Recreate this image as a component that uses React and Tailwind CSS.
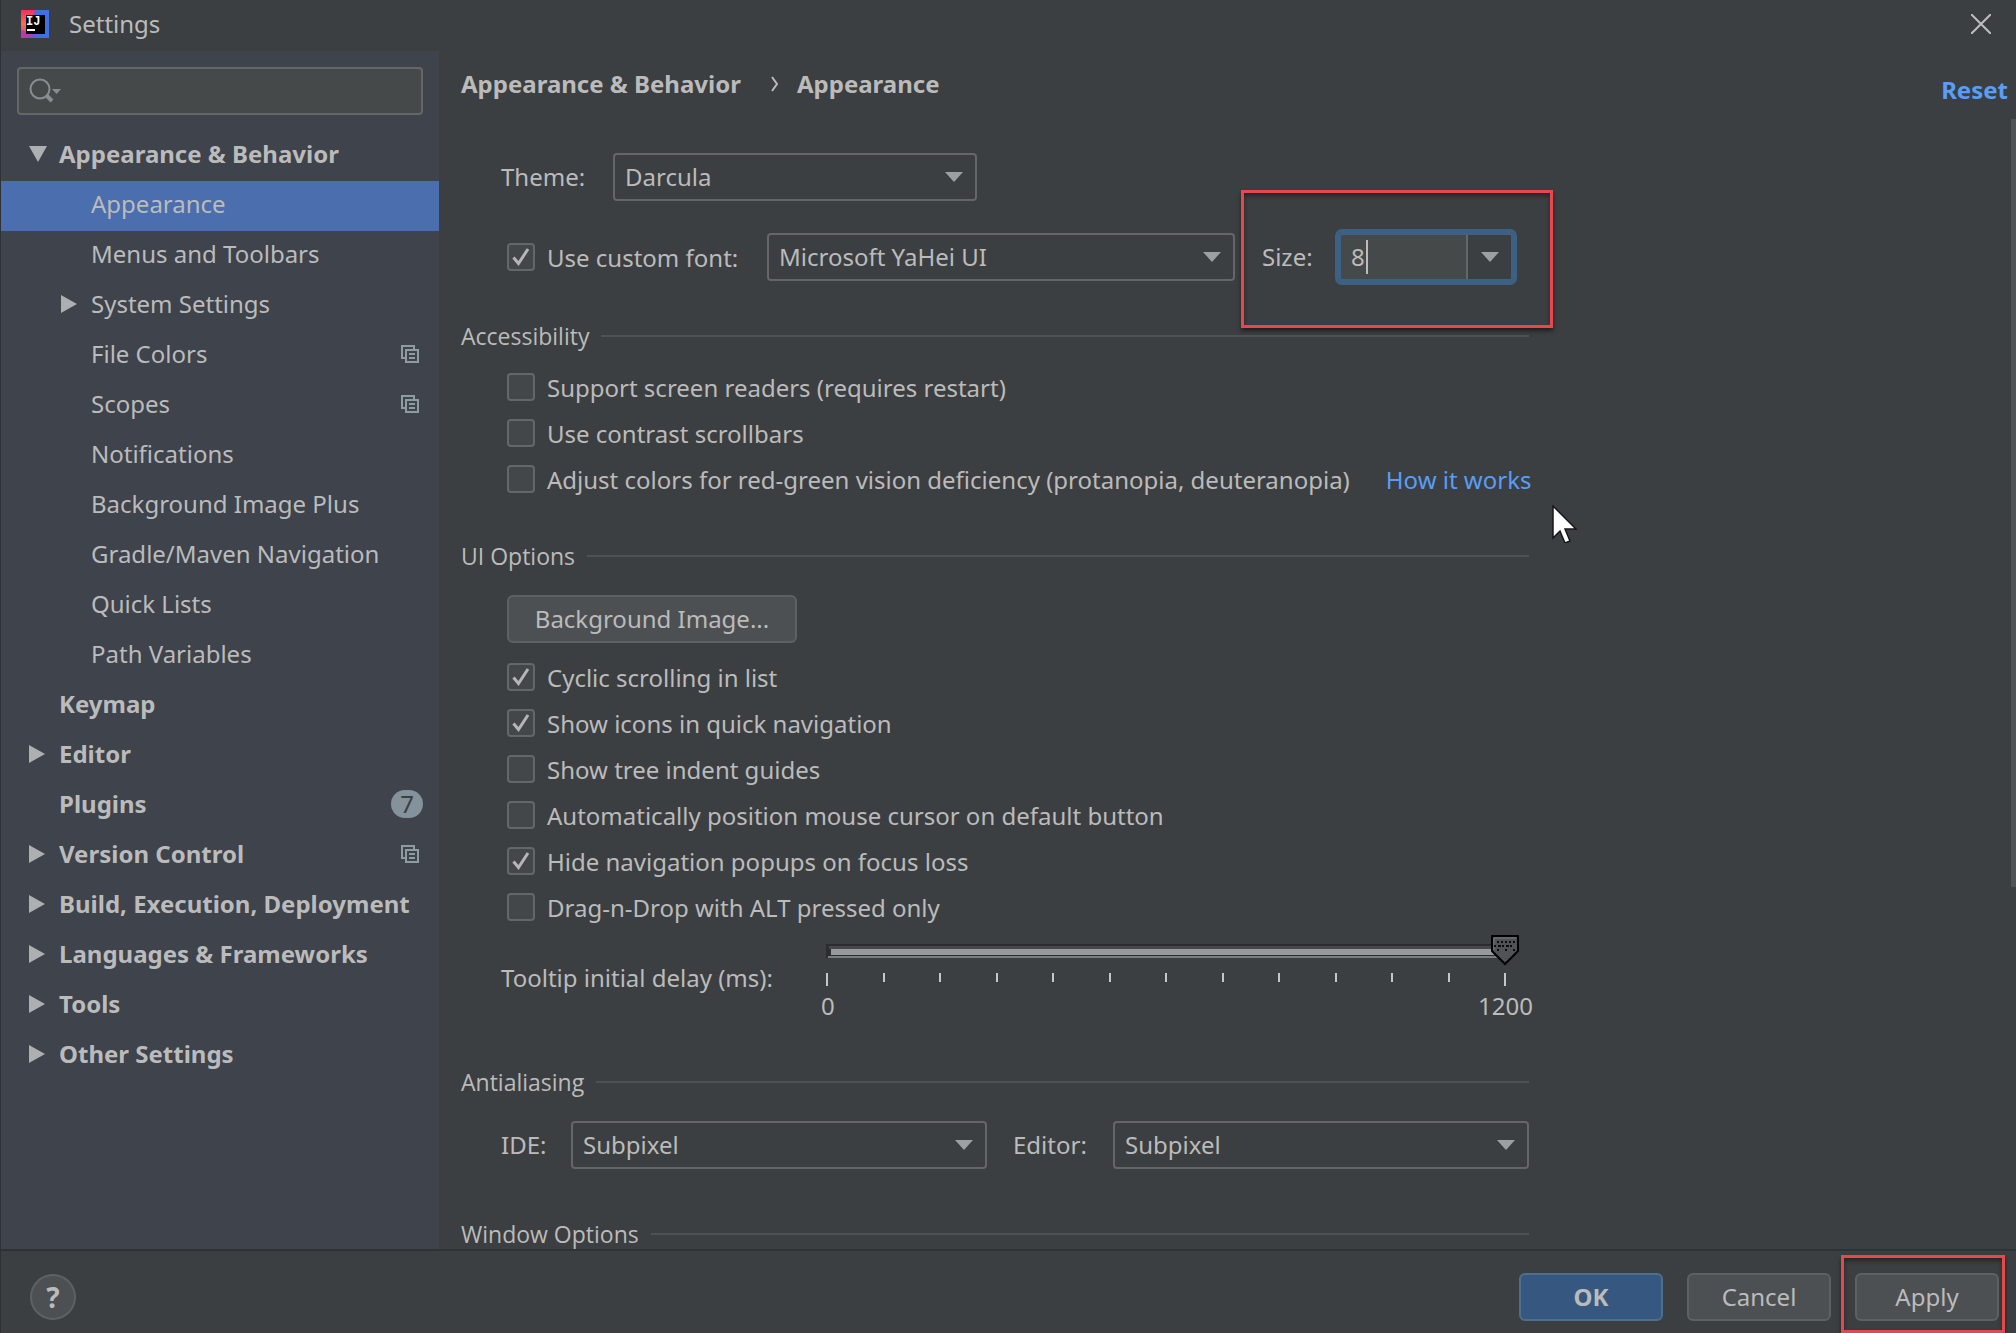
import React, { useState } from "react";

const treeItems = [
  { label: "Appearance & Behavior", level: 1, arrow: "down" },
  { label: "Appearance", level: 2, selected: true },
  { label: "Menus and Toolbars", level: 2 },
  { label: "System Settings", level: 2, arrow: "right" },
  { label: "File Colors", level: 2, project: true },
  { label: "Scopes", level: 2, project: true },
  { label: "Notifications", level: 2 },
  { label: "Background Image Plus", level: 2 },
  { label: "Gradle/Maven Navigation", level: 2 },
  { label: "Quick Lists", level: 2 },
  { label: "Path Variables", level: 2 },
  { label: "Keymap", level: 1 },
  { label: "Editor", level: 1, arrow: "right" },
  { label: "Plugins", level: 1, badge: "7" },
  { label: "Version Control", level: 1, arrow: "right", project: true },
  { label: "Build, Execution, Deployment", level: 1, arrow: "right" },
  { label: "Languages & Frameworks", level: 1, arrow: "right" },
  { label: "Tools", level: 1, arrow: "right" },
  { label: "Other Settings", level: 1, arrow: "right" },
];

function Logo() {
  return (
    <svg width="28" height="28" viewBox="0 0 28 28" aria-hidden="true">
      <defs>
        <linearGradient id="logoLeft" x1="0" y1="0" x2="0" y2="1">
          <stop offset="0" stopColor="#f0305f" />
          <stop offset="0.5" stopColor="#f5704f" />
          <stop offset="1" stopColor="#b0409a" />
        </linearGradient>
      </defs>
      <rect width="28" height="28" fill="#3f6fe0" />
      <path d="M0 0h15l-3 5-6 8 6 9-4 6H0z" fill="url(#logoLeft)" />
      <path d="M0 20l9 3-1 5H0z" fill="#b23fa8" />
      <path d="M8 28l4-6h6l-4 6z" fill="#7a50d8" />
      <rect x="5" y="5" width="19" height="19" fill="#000" />
      <text x="5" y="15" fill="#fff" fontSize="12" fontWeight="700" fontFamily="Liberation Mono, monospace">IJ</text>
      <rect x="6" y="19" width="8" height="2" fill="#fff" />
    </svg>
  );
}

function TreeArrow({ dir }) {
  return (
    <svg width="18" height="18" viewBox="0 0 18 18" fill="#adb0b3" aria-hidden="true">
      {dir === "down" ? <path d="M0 1h18L9 17z" /> : <path d="M0 0l16 9L0 18z" />}
    </svg>
  );
}

function ProjectIcon() {
  return (
    <svg width="18" height="18" viewBox="0 0 18 18" fill="none" stroke="#8f9ba3" strokeWidth="2" aria-hidden="true">
      <path d="M4 13H1V1h12v3" />
      <path d="M5 5h12v12H5z" />
      <path d="M8 9h6M8 13h6" />
    </svg>
  );
}

function TreeRow({ item }) {
  const { label, level, arrow, selected, project, badge } = item;
  return (
    <li>
      <button
        type="button"
        className={
          "flex h-[50px] w-full items-center pb-1 pr-4 text-left " +
          (level === 1 ? "pl-7 font-bold " : "pl-[60px] ") +
          (selected ? "bg-[#4b6eaf]" : "")
        }
      >
        <span className="w-[30px] shrink-0">{arrow && <TreeArrow dir={arrow} />}</span>
        <span className="flex-1 whitespace-nowrap">{label}</span>
        {project && (
          <span className="mr-1">
            <ProjectIcon />
          </span>
        )}
        {badge && (
          <span className="flex h-7 w-8 items-center justify-center rounded-full bg-[#84929b] font-normal text-[#3c3f41]">
            {badge}
          </span>
        )}
      </button>
    </li>
  );
}

function DownArrow() {
  return (
    <svg width="18" height="10" viewBox="0 0 18 10" fill="#9da0a2" aria-hidden="true">
      <path d="M0 0h18L9 10z" />
    </svg>
  );
}

function Select({ id, value, className }) {
  return (
    <div className={"relative " + className}>
      <select
        id={id}
        defaultValue={value}
        className="h-12 w-full appearance-none rounded border-2 border-[#646667] bg-[#3c3f41] pl-[10px] pr-10 text-[#bbbbbb] outline-none"
      >
        <option>{value}</option>
      </select>
      <span className="pointer-events-none absolute inset-y-0 right-[14px] flex items-center">
        <DownArrow />
      </span>
    </div>
  );
}

function Check({ label, checked }) {
  const [on, setOn] = useState(!!checked);
  return (
    <label className="flex h-[46px] items-center gap-3">
      <span className="grid">
        <input
          type="checkbox"
          checked={on}
          onChange={(e) => setOn(e.target.checked)}
          className="peer col-start-1 row-start-1 size-7 appearance-none rounded border-2 border-[#646768] bg-[#43474a]"
        />
        <svg
          width="28"
          height="28"
          viewBox="0 0 28 28"
          fill="none"
          stroke="#b4b6b8"
          strokeWidth="3"
          className="pointer-events-none invisible col-start-1 row-start-1 peer-checked:visible"
          aria-hidden="true"
        >
          <path d="M6.5 14.5l5 6L21 6" />
        </svg>
      </span>
      <span className="whitespace-nowrap pt-[2px]">{label}</span>
    </label>
  );
}

function SectionTitle({ children, className }) {
  return (
    <div className={"flex h-8 items-center gap-3 " + className}>
      <h2 className="whitespace-nowrap font-['Open_Sans','Noto_Sans',sans-serif] text-[23px]">{children}</h2>
      <span className="h-[2px] flex-1 bg-[#4f5254]" />
    </div>
  );
}

const minorTicks = [1, 2, 3, 4, 5, 6, 7, 8, 9, 10, 11];

function DelaySlider() {
  return (
    <div className="relative -mr-1 w-[720px]">
      <svg width="720" height="56" viewBox="0 0 720 56" className="block" aria-hidden="true">
        <rect x="13" y="10" width="680" height="14" fill="#2b2d2f" />
        <rect x="16" y="12" width="677" height="3" fill="#46494b" />
        <rect x="18" y="15" width="675" height="6" fill="#97999c" />
        <rect x="15" y="22" width="678" height="2" fill="#7b7e80" />
        <path d="M679 2h26v15l-13 13-13-13z" fill="#505355" stroke="#000" strokeWidth="2" />
        <path d="M681 16V4h22" fill="none" stroke="#777a7c" strokeWidth="1" />
        <g fill="#0c0d0e">
          {[684, 692, 700].map((x) => (
            <g key={x}>
              <rect x={x} y="7" width="2" height="2" />
              <rect x={x} y="15" width="2" height="2" />
              <rect x={x - 3} y="11" width="2" height="2" />
            </g>
          ))}
          {[688, 696].map((x) => (
            <g key={x}>
              <rect x={x} y="7" width="2" height="2" />
              <rect x={x - 3} y="11" width="3" height="2" />
            </g>
          ))}
        </g>
        <g fill="#c4c6c8">
          <rect x="13" y="39" width="2" height="13" />
          {minorTicks.map((i) => (
            <rect key={i} x={13 + Math.round(i * 56.5)} y="39" width="2" height="9" />
          ))}
          <rect x="691" y="39" width="2" height="13" />
        </g>
      </svg>
      <div className="flex justify-between pl-2">
        <span>0</span>
        <span>1200</span>
      </div>
      <input
        id="delay"
        type="range"
        min="0"
        max="1200"
        step="100"
        defaultValue="1200"
        className="absolute left-0 top-0 h-8 w-[706px] opacity-0"
      />
    </div>
  );
}

function MousePointer() {
  return (
    <svg width="26" height="38" viewBox="0 0 26 38" className="absolute left-[1113px] top-[386px]" aria-hidden="true">
      <path d="M1 1v32l7-7 5 12 5-2-5-12h11z" fill="#fff" stroke="#15171a" strokeWidth="1.5" />
    </svg>
  );
}

const buttonBase = "h-12 rounded-md border-2 text-center ";

export default function App() {
  return (
    <div className="flex h-screen flex-col overflow-hidden border-l border-[#2e3135] bg-[#3c3f41] font-['Noto_Sans','Open_Sans',sans-serif] text-[24px] leading-8 text-[#bbbbbb]">
      <header className="flex h-[51px] shrink-0 items-center justify-between pb-1 pl-5 pr-[25px]">
        <div className="flex items-center gap-5">
          <Logo />
          <h1>Settings</h1>
        </div>
        <button type="button" aria-label="Close">
          <svg width="20" height="20" viewBox="0 0 20 20" stroke="#bcbec0" strokeWidth="2" aria-hidden="true">
            <path d="M0 0l20 20M20 0L0 20" />
          </svg>
        </button>
      </header>

      <div className="flex min-h-0 flex-1">
        <nav className="w-[438px] shrink-0 overflow-hidden bg-[#3e434c]">
          <div className="px-4 pb-4 pt-4">
            <label className="flex h-12 items-center rounded border-2 border-[#646667] bg-[#45494a] pl-[10px]">
              <svg width="34" height="26" viewBox="0 0 34 26" fill="none" stroke="#8a8d8f" aria-hidden="true">
                <circle cx="11" cy="11" r="9.5" strokeWidth="2" />
                <path d="M17 17l6 6" strokeWidth="4" />
                <path d="M23 11h9l-4.500 5z" fill="#8a8d8f" stroke="none" />
              </svg>
              <input type="text" aria-label="Search settings" className="min-w-0 flex-1 bg-transparent outline-none" />
            </label>
          </div>
          <ul>
            {treeItems.map((item) => (
              <TreeRow key={item.label} item={item} />
            ))}
          </ul>
        </nav>

        <main className="flex min-w-0 flex-1 flex-col">
          <div className="flex h-[68px] shrink-0 justify-between pl-[22px] pr-2 font-bold">
            <div className="flex items-center pb-[2px]">
              <span>Appearance &amp; Behavior</span>
              <svg width="8" height="16" viewBox="0 0 8 16" fill="none" stroke="#bbbbbb" strokeWidth="2" className="ml-[30px] mr-[18px]" aria-hidden="true">
                <path d="M1 1l5 7-5 7" />
              </svg>
              <span>Appearance</span>
            </div>
            <a href="#reset" className="mt-[23px] text-[#589df6]">
              Reset
            </a>
          </div>

          <div className="flex min-h-0 flex-1 justify-between overflow-hidden">
            <form className="relative w-full max-w-[1090px] pl-[22px] pt-[34px]" onSubmit={(e) => e.preventDefault()}>
              <div className="flex items-center pl-10">
                <label htmlFor="theme" className="w-28">
                  Theme:
                </label>
                <Select id="theme" value="Darcula" className="w-[364px]" />
              </div>

              <div className="mt-8 flex h-12 items-center pl-[46px]">
                <div className="w-[260px]">
                  <Check label="Use custom font:" checked />
                </div>
                <Select id="font" value="Microsoft YaHei UI" className="w-[468px]" />
                <div className="relative ml-[27px] flex items-center">
                  <label htmlFor="size" className="w-[76px]">
                    Size:
                  </label>
                  <div className="relative flex h-[50px] w-[176px] overflow-hidden rounded border-[3px] border-[#3d6185] bg-[#45494a] outline-[3px] outline-[#3d6185]">
                    <input
                      id="size"
                      type="text"
                      defaultValue="8"
                      className="w-0 min-w-0 flex-1 bg-transparent pl-[10px] outline-none"
                    />
                    <span className="absolute left-[25px] top-[5px] h-[34px] w-[2px] bg-[#bbbbbb]" />
                    <button
                      type="button"
                      aria-label="Choose size"
                      className="flex w-[45px] items-center justify-center border-l-2 border-[#646667] bg-[#3c3f41]"
                    >
                      <DownArrow />
                    </button>
                  </div>
                  <span className="pointer-events-none absolute -bottom-[46px] -left-[21px] -right-[39px] -top-[42px] border-[3px] border-[#e5484d] shadow-[0_3px_4px_rgba(0,0,0,0.5),inset_0_3px_4px_rgba(0,0,0,0.4)]" />
                </div>
              </div>

              <SectionTitle className="mt-[39px]">Accessibility</SectionTitle>
              <div className="mt-3 pl-[46px]">
                <Check label="Support screen readers (requires restart)" />
                <Check label="Use contrast scrollbars" />
                <div className="flex items-center gap-9">
                  <Check label="Adjust colors for red-green vision deficiency (protanopia, deuteranopia)" />
                  <a href="#how" className="whitespace-nowrap pt-[2px] text-[#589df6]">
                    How it works
                  </a>
                </div>
              </div>

              <SectionTitle className="mt-[38px]">UI Options</SectionTitle>
              <div className="mt-[23px] pl-[46px]">
                <button type="button" className={buttonBase + "w-[290px] border-[#5e6162] bg-[#4c5052]"}>
                  Background Image...
                </button>
                <div className="mt-[11px]">
                  <Check label="Cyclic scrolling in list" checked />
                  <Check label="Show icons in quick navigation" checked />
                  <Check label="Show tree indent guides" />
                  <Check label="Automatically position mouse cursor on default button" />
                  <Check label="Hide navigation popups on focus loss" checked />
                  <Check label="Drag-n-Drop with ALT pressed only" />
                </div>
              </div>

              <div className="mt-1 flex items-center justify-between pl-10">
                <label htmlFor="delay" className="whitespace-nowrap">
                  Tooltip initial delay (ms):
                </label>
                <DelaySlider />
              </div>

              <SectionTitle className="mt-11">Antialiasing</SectionTitle>
              <div className="mt-[23px] flex items-center pl-10">
                <label htmlFor="ide" className="w-[70px]">
                  IDE:
                </label>
                <Select id="ide" value="Subpixel" className="flex-1" />
                <label htmlFor="editor" className="ml-[26px] w-[100px]">
                  Editor:
                </label>
                <Select id="editor" value="Subpixel" className="flex-1" />
              </div>

              <SectionTitle className="mt-[49px]">Window Options</SectionTitle>
              <MousePointer />
            </form>
            <div className="h-[768px] w-[5px] shrink-0 bg-[#505355]" />
          </div>
        </main>
      </div>

      <footer className="flex h-[84px] shrink-0 items-center justify-between border-t-2 border-[#303335] pb-3 pl-[29px] pr-[17px] pt-[22px]">
        <button
          type="button"
          aria-label="Help"
          className="flex size-[46px] items-center justify-center rounded-full border-2 border-[#5e6162] bg-[#4c5052] text-[28px] font-bold"
        >
          ?
        </button>
        <div className="flex gap-6">
          <button type="button" className={buttonBase + "w-36 border-[#4c708c] bg-[#365880] font-bold"}>
            OK
          </button>
          <button type="button" className={buttonBase + "w-36 border-[#5e6162] bg-[#4c5052]"}>
            Cancel
          </button>
          <div className="relative">
            <button type="button" className={buttonBase + "w-36 border-[#5e6162] bg-[#4c5052]"}>
              Apply
            </button>
            <span className="pointer-events-none absolute -bottom-3 -left-[14px] -right-[6px] -top-[18px] border-[3px] border-[#e5484d] shadow-[0_3px_4px_rgba(0,0,0,0.5),inset_0_3px_4px_rgba(0,0,0,0.4)]" />
          </div>
        </div>
      </footer>
    </div>
  );
}
